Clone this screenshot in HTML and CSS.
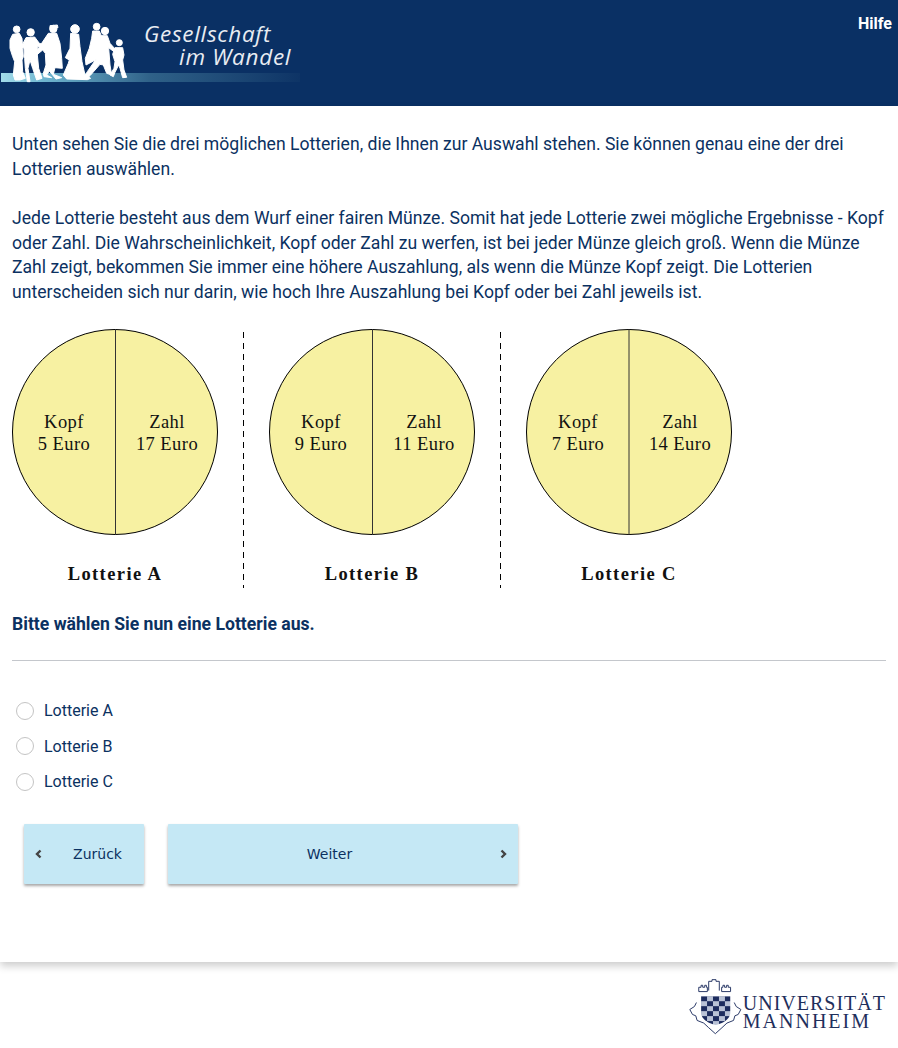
FILE: index.html
```html
<!DOCTYPE html>
<html lang="de">
<head>
<meta charset="utf-8">
<title>Gesellschaft im Wandel</title>
<link rel="stylesheet" href="styles.css">
</head>
<body>
<header class="site-header">
  <svg class="brand" width="304" height="106" viewBox="0 0 304 106">
    <defs>
      <linearGradient id="band" x1="0" x2="1" y1="0" y2="0">
        <stop offset="0" stop-color="#a3dcea"/>
        <stop offset="0.14" stop-color="#6fb6d0"/>
        <stop offset="0.5" stop-color="#2f6188"/>
        <stop offset="1" stop-color="#0e3466"/>
      </linearGradient>
    </defs>
    <rect x="1" y="73" width="299" height="9" fill="url(#band)"/>
    <g class="walkers" transform="translate(0 15) scale(0.3333)">
      <circle cx="50" cy="43" r="10"/>
      <path d="M38 58 58 55 66 70 68 100 70 125 66 135 68 170 76 190 60 195 45 195 40 180 44 140 38 125 30 100 30 75Z"/>
      <circle cx="92" cy="52" r="11"/>
      <path d="M78 68 104 66 118 85 128 88 124 95 112 95 112 120 116 160 126 190 110 195 98 160 90 135 84 160 90 200 82 200 76 160 74 130 72 100 64 95Z"/>
      <circle cx="160" cy="42" r="11"/>
      <path d="M150 32 172 30 174 38 150 40Z"/>
      <path d="M145 55 170 55 180 85 185 130 187 160 165 158 160 178 185 188 168 192 148 168 140 180 155 188 132 185 130 175 138 150 136 115 128 105 110 120 108 112 125 85Z"/>
      <circle cx="225" cy="42" r="13"/>
      <path d="M212 55 236 58 240 95 246 140 255 180 272 190 262 194 200 192 190 180 205 145 208 135 196 128 210 100Z"/>
      <circle cx="290" cy="35" r="10"/>
      <path d="M278 48 298 48 303 60 296 130 258 150 256 130 268 100 275 70Z"/>
      <circle cx="315" cy="48" r="11"/>
      <path d="M302 62 322 62 330 85 348 105 342 110 326 98 330 150 335 180 320 175 310 150 300 148 272 180 262 190 250 190 262 170 290 130 296 95Z"/>
      <circle cx="358" cy="83" r="9"/>
      <path d="M345 98 368 98 372 120 368 135 372 165 380 187 368 188 360 160 356 150 345 172 340 185 330 180 342 160 345 140 338 118Z"/>
    </g>
    <text class="brand-line" x="144" y="42">Gesellschaft</text>
    <text class="brand-line" x="179" y="65">im Wandel</text>
  </svg>
  <a class="help" href="#">Hilfe</a>
</header>

<main class="content">
  <p class="intro">Unten sehen Sie die drei möglichen Lotterien, die Ihnen zur Auswahl stehen. Sie können genau eine der drei Lotterien auswählen.</p>
  <p class="intro">Jede Lotterie besteht aus dem Wurf einer fairen Münze. Somit hat jede Lotterie zwei mögliche Ergebnisse - Kopf oder Zahl. Die Wahrscheinlichkeit, Kopf oder Zahl zu werfen, ist bei jeder Münze gleich groß. Wenn die Münze Zahl zeigt, bekommen Sie immer eine höhere Auszahlung, als wenn die Münze Kopf zeigt. Die Lotterien unterscheiden sich nur darin, wie hoch Ihre Auszahlung bei Kopf oder bei Zahl jeweils ist.</p>

  <svg class="lotteries" width="730" height="262" viewBox="0 0 730 262">
    <g class="coin">
      <circle cx="103" cy="104" r="102.5"/>
      <line x1="103.500" y1="1" x2="103.500" y2="207"/>
      <text x="52" y="100">Kopf</text><text x="52" y="122">5 Euro</text>
      <text x="155" y="100">Zahl</text><text x="155" y="122">17 Euro</text>
      <text class="coin-name" x="103" y="252">Lotterie A</text>
    </g>
    <line class="divider" x1="231.500" y1="4" x2="231.500" y2="260"/>
    <g class="coin">
      <circle cx="360" cy="104" r="102.5"/>
      <line x1="360.500" y1="1" x2="360.500" y2="207"/>
      <text x="309" y="100">Kopf</text><text x="309" y="122">9 Euro</text>
      <text x="412" y="100">Zahl</text><text x="412" y="122">11 Euro</text>
      <text class="coin-name" x="360" y="252">Lotterie B</text>
    </g>
    <line class="divider" x1="488.500" y1="4" x2="488.500" y2="260"/>
    <g class="coin">
      <circle cx="617" cy="104" r="102.5"/>
      <line x1="617" y1="1" x2="617" y2="207"/>
      <text x="566" y="100">Kopf</text><text x="566" y="122">7 Euro</text>
      <text x="668" y="100">Zahl</text><text x="668" y="122">14 Euro</text>
      <text class="coin-name" x="617" y="252">Lotterie C</text>
    </g>
  </svg>

  <p class="question">Bitte wählen Sie nun eine Lotterie aus.</p>
  <hr class="rule">

  <form class="choices">
    <label class="choice"><span class="radio"></span>Lotterie A</label>
    <label class="choice"><span class="radio"></span>Lotterie B</label>
    <label class="choice"><span class="radio"></span>Lotterie C</label>
  </form>

  <nav class="pager">
    <button class="btn btn-back" type="button">
      <svg class="chev" width="7" height="10" viewBox="0 0 7 10"><path d="M5.500 1.500 2 5 5.500 8.500"/></svg>
      <span class="btn-label">Zurück</span>
    </button>
    <button class="btn btn-next" type="button">
      <span class="btn-label">Weiter</span>
      <svg class="chev" width="7" height="10" viewBox="0 0 7 10"><path d="M1.500 1.500 5 5 1.500 8.500"/></svg>
    </button>
  </nav>
</main>

<footer class="site-footer">
  <div class="uni">
    <svg class="crest" width="55" height="58" viewBox="20 10 165 175">
      <defs>
        <pattern id="check" x="62" y="65" width="36" height="30" patternUnits="userSpaceOnUse">
          <rect width="36" height="30" fill="#b9c2d6"/>
          <rect width="18" height="15" fill="#1d2c5e"/>
          <rect x="18" y="15" width="18" height="15" fill="#1d2c5e"/>
        </pattern>
      </defs>
      <g fill="none" stroke="#2b3a68" stroke-width="3">
        <path d="M55 38h7v-6h5v6h6v-6h5v6h3v13H55zM124 38h4v-6h5v6h6v-6h5v6h7v13h-27z"/>
        <path d="M85 48V20h10v-5h12v5h10v28"/>
        <path d="M48 84 42 96 28 105 36 120 46 124 50 138 70 146 85 160 105 178 125 160 140 146 160 138 164 124 174 120 182 105 168 96 162 84"/>
      </g>
      <path d="M62 65H150V115C150 135 125 148 106 152 87 148 62 135 62 115Z" fill="url(#check)"/>
    </svg>
    <div class="uni-name"><span class="uni-top">UNIVERSITÄT</span><span class="uni-bottom">MANNHEIM</span></div>
  </div>
</footer>
</body>
</html>
```

FILE: styles.css
```css
* { box-sizing: border-box; }
html, body { margin: 0; padding: 0; }
body {
  background: #fff;
  color: #0b3161;
  font-family: Roboto, "Liberation Sans", sans-serif;
  width: 898px;
  height: 1048px;
  overflow: hidden;
}
.site-header {
  height: 106px;
  background: #0a3064;
  display: flex;
  justify-content: space-between;
  align-items: flex-start;
}
.brand { display: block; }
.walkers { fill: #fff; stroke: #fff; stroke-width: 3; stroke-linejoin: round; }
.brand-line {
  fill: #e8ecf2;
  font-family: "Open Sans", sans-serif;
  font-style: italic;
  font-size: 22.500px;
  letter-spacing: 0.7px;
}
.help {
  color: #fff;
  font-weight: 700;
  font-size: 16px;
  line-height: 19px;
  margin: 14px 6px 0 0;
  text-decoration: none;
}
.content {
  position: relative;
  z-index: 1;
  height: 856px;
  padding: 26px 12px 0;
  background: #fff;
  box-shadow: 0 4px 8px rgba(0, 0, 0, 0.2);
}
.intro {
  margin: 0 0 25px;
  font-size: 17.600px;
  line-height: 24.500px;
}
.lotteries { display: block; margin-top: -1px; }
.coin circle { fill: #f7f1a2; stroke: #000; stroke-width: 1; }
.coin line { stroke: #333; stroke-width: 1; }
.coin text {
  font-family: "Liberation Serif", serif;
  font-size: 18.500px;
  letter-spacing: 0.45px;
  text-anchor: middle;
  fill: #111;
}
.coin .coin-name { font-weight: 700; font-size: 18.500px; letter-spacing: 1.400px; }
.divider { stroke: #000; stroke-width: 1; stroke-dasharray: 6 5; }
.question {
  margin: 22px 0 0;
  font-size: 17.600px;
  font-weight: 700;
  line-height: 24px;
}
.rule {
  margin: 24px 0 0;
  border: 0;
  height: 1px;
  width: 874px;
  background: #c4c7cc;
}
.choices {
  display: flex;
  flex-direction: column;
  gap: 14px;
  margin-top: 39px;
  padding-left: 4px;
}
.choice {
  display: flex;
  align-items: center;
  gap: 10px;
  font-size: 16px;
  line-height: 21.500px;
}
.radio {
  width: 18px;
  height: 18px;
  border: 1px solid #c4c4c4;
  border-radius: 50%;
  background: #fff;
}
.pager {
  display: flex;
  gap: 24px;
  margin: 31px 0 0 12px;
}
.btn {
  height: 60px;
  border: 0;
  border-radius: 1px;
  background: #c5e8f5;
  color: #0b3161;
  font-family: "DejaVu Sans", sans-serif;
  font-size: 14px;
  box-shadow: 0 2px 3px rgba(0, 0, 0, 0.35);
  display: flex;
  align-items: center;
  padding: 0 11px;
}
.btn-back { width: 120px; }
.btn-next { width: 350px; }
.btn-label { flex: 1; text-align: center; }
.btn-back .btn-label { padding-left: 20px; }
.btn-next .btn-label { padding-right: 20px; }
.chev { fill: none; stroke: #444; stroke-width: 2.400; flex: none; }
.site-footer {
  height: 86px;
  background: #fff;
  display: flex;
  justify-content: flex-end;
}
.uni {
  display: flex;
  align-items: flex-start;
  gap: 1px;
  margin: 16px 12px 0 0;
}
.uni-name {
  display: flex;
  flex-direction: column;
  margin-top: 16px;
  font-family: "Liberation Serif", serif;
  font-size: 20px;
  line-height: 18px;
  color: #1f2f5c;
}
.uni-top { letter-spacing: 1px; }
.uni-bottom { letter-spacing: 2px; }
```
